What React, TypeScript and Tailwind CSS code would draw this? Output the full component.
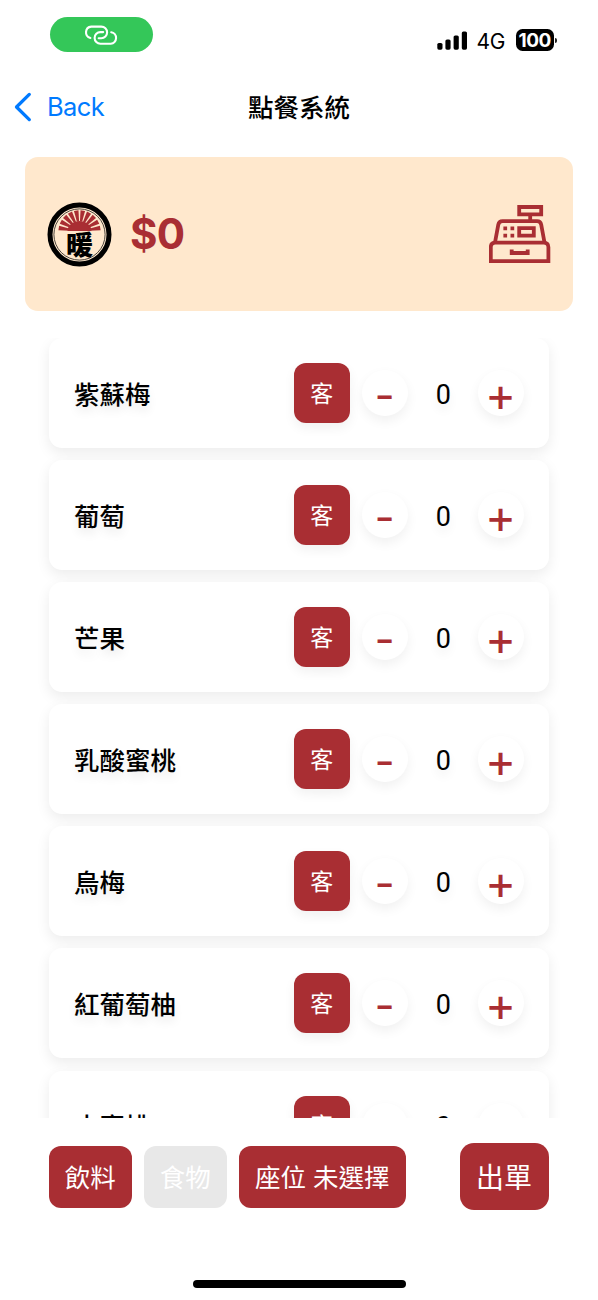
import { useState } from "react";
import type { ReactNode } from "react";
import clsx from "clsx";

const drinks = ["紫蘇梅", "葡萄", "芒果", "乳酸蜜桃", "烏梅", "紅葡萄柚", "水蜜桃"];

export default function App() {
  return (
    <div className="flex h-[1300px] w-[598px] flex-col overflow-hidden bg-white font-['Inter','Noto_Sans_CJK_TC',sans-serif] text-black">
      <StatusBar />
      <NavBar />
      <TotalBanner total={0} />

      <main className="mt-[27px] h-[780px] shrink-0 overflow-hidden px-[49px]">
        <div className="flex w-[499.5px] flex-col gap-[12.1px]">
          {drinks.map((name) => (
            <DrinkRow key={name} name={name} />
          ))}
        </div>
      </main>

      <footer className="mt-[25px] flex h-[67px] shrink-0 items-center gap-[12.5px] pr-[49.5px] pl-[49px]">
        <ActionButton className="w-[82.5px]">飲料</ActionButton>
        <ActionButton className="w-[82.5px]" muted>
          食物
        </ActionButton>
        <ActionButton className="w-[166.5px]">座位 未選擇</ActionButton>
        <button className="ml-auto flex h-[67px] w-[89px] items-center justify-center rounded-[14px] bg-[#a92e33] pt-0.5 text-[28px] leading-none text-white">
          出單
        </button>
      </footer>

      <div className="mx-auto mt-[69.5px] h-2 w-[213px] shrink-0 rounded-full bg-black" />
    </div>
  );
}

function StatusBar() {
  return (
    <div className="flex h-20 shrink-0 items-start pr-[41px] pl-[50px]">
      <div className="mt-[17px] flex h-[35px] w-[102.5px] items-center justify-center rounded-full bg-[#34c759]">
        <svg width="34" height="20" viewBox="0 0 34 20" fill="none" stroke="white" strokeWidth="2.1" strokeLinecap="round">
          <path d="M6.4 13A5.8 5.8 0 0 1 7.3 1.6h10a5.8 5.8 0 0 1 0 11.6h-2.6" />
          <path d="M27.2 7.2A5.8 5.8 0 0 1 26.8 18.7H16.4a5.8 5.8 0 0 1 0-11.6h2.8" />
        </svg>
      </div>
      <div className="mt-[29px] ml-auto flex h-[22px] items-center">
        <svg width="31" height="19" viewBox="0 0 31 19" fill="currentColor">
          <rect x="0.3" y="12" width="5.2" height="6.7" rx="1.6" />
          <rect x="8.4" y="8.5" width="5.2" height="10.2" rx="1.6" />
          <rect x="16.6" y="4.5" width="5.2" height="14.2" rx="1.6" />
          <rect x="24.8" y="0.5" width="5.2" height="18.2" rx="1.6" />
        </svg>
        <span className="ml-[8.5px] w-[31px] pt-0.5 text-[21px] leading-none tracking-[-0.3px]">4G</span>
        <span className="ml-2 flex h-[21.5px] w-[38.5px] items-center justify-center rounded-[6.5px] bg-black text-[19px] leading-none font-bold tracking-[-0.5px] text-white">
          100
        </span>
        <span className="ml-px h-[5px] w-[2px] rounded-r-full bg-[#222]" />
      </div>
    </div>
  );
}

function NavBar() {
  return (
    <header className="grid h-[54px] shrink-0 grid-cols-3 items-center px-[14px]">
      <a className="flex items-center gap-[15px] text-[25.5px] leading-none tracking-[-0.6px] text-[#007aff]">
        <svg width="18" height="30" viewBox="0 0 18 30" fill="none" stroke="currentColor" strokeWidth="3.3" strokeLinecap="round" strokeLinejoin="round">
          <path d="M15.3 2.4 2.5 15l12.8 12.6" />
        </svg>
        Back
      </a>
      <h1 className="pt-px text-center text-[25.5px] leading-none font-medium">點餐系統</h1>
    </header>
  );
}

function TotalBanner({ total }: { total: number }) {
  return (
    <section className="mx-[25px] mt-[23px] flex h-[154px] shrink-0 items-center rounded-[13px] bg-[#ffe8cd] px-[22px]">
      <Logo />
      <span className="ml-[18px] text-[42px] leading-none font-bold tracking-[-0.7px] text-[#a92e33]">${total}</span>
      <RegisterIcon />
    </section>
  );
}

function Logo() {
  const rays = [-81, -63, -45, -27, -9, 9, 27, 45, 63, 81];
  return (
    <svg width="65" height="65" viewBox="0 0 65 65">
      <circle cx="32.5" cy="32.5" r="29.5" fill="#ffe8cd" stroke="black" strokeWidth="5" />
      <circle cx="32.5" cy="32.5" r="25.6" fill="none" stroke="black" strokeWidth="0.7" />
      <g fill="#a92e33">
        <path d="M20.5 29a12 10 0 0 1 24 0z" />
        {rays.map((angle) => (
          <path key={angle} d="M31.4 19.5 30.2 8.3h4.6l-1.2 11.2z" transform={`rotate(${angle} 32.5 29.3)`} />
        ))}
      </g>
      <rect x="9.5" y="29" width="46" height="4" fill="#ffe8cd" />
      <text x="32.5" y="52.8" textAnchor="middle" fontSize="27" fontWeight="900">
        暖
      </text>
    </svg>
  );
}

function RegisterIcon() {
  return (
    <svg className="ml-auto" width="62" height="60" viewBox="0 0 62 60" fill="none" stroke="#a92e33" strokeWidth="3.8">
      <path d="M30.2 3h22v7.4h-22zM41.2 10.4V17" />
      <path d="M5.9 39 9.3 20.7Q10 17.2 13.6 17.2h34.5q3.4 0 4.1 3.5L55.6 39" />
      <path d="M1.8 57.2V43.2q0-4.6 4.6-4.6h48.4q4.6 0 4.6 4.6v14z" />
      <path d="M30.2 24.2h14.6v7.4H30.2z" />
      <path d="M22.7 45.6v3.4h16v-3.4" />
      <path d="M14.4 24.4h3.7m3.4 0h3.7M14.4 31.6h3.7m3.4 0h3.7" />
    </svg>
  );
}

function DrinkRow({ name }: { name: string }) {
  const [count, setCount] = useState(0);

  return (
    <div className="flex h-[110px] shrink-0 items-center rounded-[13px] bg-white px-[25px] shadow-[0_5px_14px_rgba(0,0,0,0.08)]">
      <span className="pt-[3px] text-[25.5px] leading-none font-medium [text-shadow:0_6px_10px_rgba(0,0,0,0.08)]">{name}</span>
      <button className="ml-auto flex h-[60px] w-[55.5px] items-center justify-center rounded-[12px] bg-[#a92e33] pt-0.5 text-[23px] leading-none text-white shadow-[0_5px_12px_rgba(0,0,0,0.06)]">
        客
      </button>
      <RoundButton className="ml-[12.5px] pt-1 pr-px text-[44px]" onClick={() => setCount(Math.max(0, count - 1))}>
        -
      </RoundButton>
      <span className="w-[69.5px] pt-1 pl-px text-center font-[Roboto] text-[27px] leading-none [text-shadow:0_6px_10px_rgba(0,0,0,0.08)]">{count}</span>
      <RoundButton className="text-[47px]" onClick={() => setCount(count + 1)}>
        +
      </RoundButton>
    </div>
  );
}

function RoundButton({ className, onClick, children }: { className?: string; onClick: () => void; children: ReactNode }) {
  return (
    <button
      onClick={onClick}
      className={clsx(
        "flex size-[46px] items-center justify-center rounded-full bg-white leading-none font-normal text-[#a92e33] shadow-[0_5px_12px_rgba(0,0,0,0.06)]",
        className,
      )}
    >
      {children}
    </button>
  );
}

function ActionButton({ className, muted, children }: { className?: string; muted?: boolean; children: ReactNode }) {
  return (
    <button
      className={clsx(
        "flex h-[62px] items-center justify-center rounded-[12px] pt-0.5 text-[25.5px] leading-none whitespace-nowrap text-white",
        muted ? "bg-[#e8e8e8]" : "bg-[#a92e33]",
        className,
      )}
    >
      {children}
    </button>
  );
}
